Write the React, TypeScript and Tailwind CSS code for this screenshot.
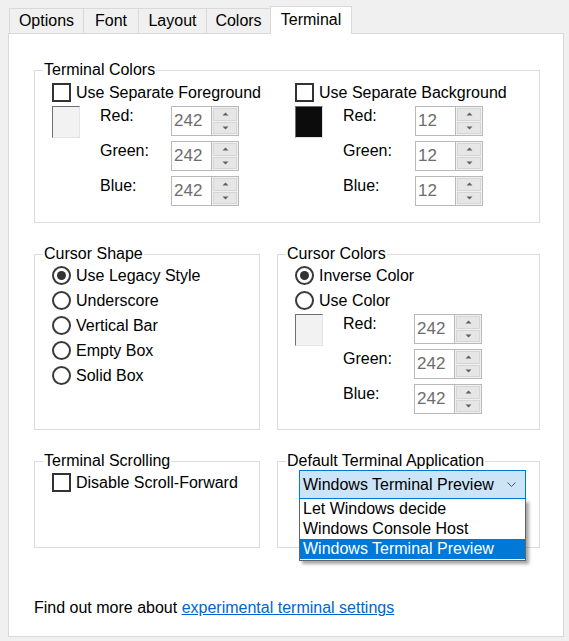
import React from "react";

const font = { fontFamily: '"Liberation Sans", Arial, sans-serif' };

function Tab({ label, w, active }: { label: string; w: string; active?: boolean }) {
  if (active) {
    return (
      <div
        className={`${w} h-[28px] -mb-px relative z-10 bg-white border border-b-0 border-[#d9d9d9] flex items-center justify-center pb-[2px]`}
      >
        {label}
      </div>
    );
  }
  return (
    <div
      className={`${w} h-[25px] border border-b-0 border-r-0 border-[#d9d9d9] bg-[#f0f0f0] flex items-center justify-center`}
    >
      {label}
    </div>
  );
}

function Checkbox({ label }: { label: string }) {
  return (
    <div className="flex items-center h-[19px] gap-[5px]">
      <div className="w-[19px] h-[19px] border-2 border-[#333333] bg-white shrink-0" />
      <span className="leading-[18px]">{label}</span>
    </div>
  );
}

function Radio({ label, checked }: { label: string; checked?: boolean }) {
  return (
    <div className="flex items-center h-[25px] gap-[5px]">
      <div className="w-[19px] h-[19px] rounded-full border-2 border-[#3a3a3a] bg-white flex items-center justify-center shrink-0">
        {checked && <div className="w-[9px] h-[9px] rounded-full bg-[#333333]" />}
      </div>
      <span className="leading-[18px]">{label}</span>
    </div>
  );
}

function Spinner({ value }: { value: string }) {
  return (
    <div className="w-[68px] h-[30px] border border-[#b9b9b9] bg-white flex">
      <div className="flex-1 pl-[2px] flex items-center text-[#6d6d6d] text-[17px]">{value}</div>
      <div className="w-[27px] border-l border-[#b9b9b9] bg-[#f0f0f0] flex flex-col p-px gap-px">
        <div className="flex-1 bg-[#e6e6e6] border border-[#d6d6d6] flex items-center justify-center">
          <svg width="7" height="4" viewBox="0 0 7 4">
            <path d="M0.5 3.5 L3.5 0.5 L6.5 3.5 Z" fill="#606060" />
          </svg>
        </div>
        <div className="flex-1 bg-[#e6e6e6] border border-[#d6d6d6] flex items-center justify-center">
          <svg width="7" height="4" viewBox="0 0 7 4">
            <path d="M0.5 0.5 L3.5 3.5 L6.5 0.5 Z" fill="#606060" />
          </svg>
        </div>
      </div>
    </div>
  );
}

function ColorBlock({ swatch, value, labelW }: { swatch: string; value: string; labelW: string }) {
  return (
    <div className="flex">
      <div
        className={`w-[28px] h-[32px] border border-t-[#6f6f6f] border-l-[#6f6f6f] border-r-[#e3e3e3] border-b-[#e3e3e3] ${swatch}`}
      />
      <div className="ml-[20px] flex flex-col gap-[5px]">
        {["Red:", "Green:", "Blue:"].map((l) => (
          <div key={l} className="flex">
            <div className={`${labelW} leading-[18px] pt-px`}>{l}</div>
            <Spinner value={value} />
          </div>
        ))}
      </div>
    </div>
  );
}

function Group({
  title,
  className,
  inner,
  children,
}: {
  title: string;
  className: string;
  inner: string;
  children: React.ReactNode;
}) {
  return (
    <fieldset className={`border border-[#dcdcdc] ${className}`}>
      <legend className="ml-[8px] px-px leading-[18px]">{title}</legend>
      <div className={inner}>{children}</div>
    </fieldset>
  );
}

export default function App() {
  return (
    <div className="w-[569px] h-[641px] bg-[#f0f0f0] text-black text-[16px] overflow-hidden" style={font}>
      {/* tabs */}
      <div className="flex items-end pl-[9px] pt-[6px]">
        <Tab label="Options" w="w-[74px]" />
        <Tab label="Font" w="w-[55px]" />
        <Tab label="Layout" w="w-[68px]" />
        <Tab label="Colors" w="w-[64px]" />
        <Tab label="Terminal" w="w-[82px]" active />
      </div>

      {/* panel */}
      <div className="ml-[8px] w-[556px] h-[604px] bg-white border border-[#d9d9d9] pl-[25px] pt-[27px]">
        <Group title="Terminal Colors" className="w-[506px]" inner="pl-[17px] pb-[16px]">
          <div className="grid grid-cols-[243px_243px] mt-[4px]">
            <div className="flex flex-col gap-[4px]">
              <Checkbox label="Use Separate Foreground" />
              <ColorBlock swatch="bg-[#f2f2f2]" value="242" labelW="w-[71px]" />
            </div>
            <div className="flex flex-col gap-[4px]">
              <Checkbox label="Use Separate Background" />
              <ColorBlock swatch="bg-[#0c0c0c]" value="12" labelW="w-[72px]" />
            </div>
          </div>
        </Group>

        <div className="flex gap-[17px] mt-[22px]">
          <Group title="Cursor Shape" className="w-[226px]" inner="pl-[17px]">
            <Radio label="Use Legacy Style" checked />
            <Radio label="Underscore" />
            <Radio label="Vertical Bar" />
            <Radio label="Empty Box" />
            <Radio label="Solid Box" />
          </Group>
          <Group title="Cursor Colors" className="w-[263px]" inner="pl-[17px] pb-[15px]">
            <Radio label="Inverse Color" checked />
            <Radio label="Use Color" />
            <div className="mt-px">
              <ColorBlock swatch="bg-[#f2f2f2]" value="242" labelW="w-[71px]" />
            </div>
          </Group>
        </div>

        <div className="flex gap-[17px] mt-[22px]">
          <Group title="Terminal Scrolling" className="w-[226px] h-[96px]" inner="pl-[17px] pt-[3px]">
            <Checkbox label="Disable Scroll-Forward" />
          </Group>
          <Group title="Default Terminal Application" className="w-[263px] h-[96px]" inner="pl-[21px]">
            <div className="relative w-[227px]">
              <div className="h-[29px] border border-[#0078d7] bg-[#cce4f7] flex items-center pl-[3px] pr-[9px]">
                <span className="flex-1">Windows Terminal Preview</span>
                <svg width="9" height="5" viewBox="0 0 9 5">
                  <path d="M0.5 0.5 L4.5 4.5 L8.5 0.5" fill="none" stroke="#555555" strokeWidth="1" />
                </svg>
              </div>
              <div className="absolute left-0 top-[29px] w-[227px] h-[62px] bg-white border border-t-0 border-[#646464] shadow-[3px_3px_3px_rgba(0,0,0,0.35)] z-20">
                <div className="h-[20px] leading-[20px] pl-[3px]">Let Windows decide</div>
                <div className="h-[20px] leading-[20px] pl-[3px]">Windows Console Host</div>
                <div className="h-[20px] leading-[20px] pl-[3px] bg-[#0078d7] text-white">
                  Windows Terminal Preview
                </div>
              </div>
            </div>
          </Group>
        </div>

        <div className="mt-[51px] leading-[18px]">
          Find out more about{" "}
          <a href="#" className="text-[#0066cc] underline">
            experimental terminal settings
          </a>
        </div>
      </div>
    </div>
  );
}
